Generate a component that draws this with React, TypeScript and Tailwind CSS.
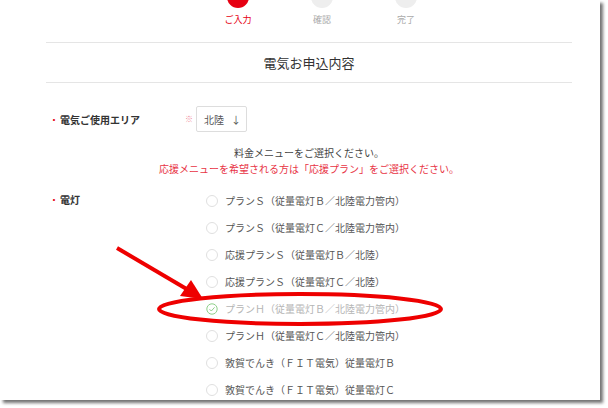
import React from 'react';

const plans = [
  'プランＳ（従量電灯Ｂ／北陸電力管内）',
  'プランＳ（従量電灯Ｃ／北陸電力管内）',
  '応援プランＳ（従量電灯Ｂ／北陸）',
  '応援プランＳ（従量電灯Ｃ／北陸）',
  'プランＨ（従量電灯Ｂ／北陸電力管内）',
  'プランＨ（従量電灯Ｃ／北陸電力管内）',
  '敦賀でんき（ＦＩＴ電気）従量電灯Ｂ',
  '敦賀でんき（ＦＩＴ電気）従量電灯Ｃ',
];

const font = { fontFamily: '"Noto Sans CJK JP", "Noto Sans", sans-serif' };

export default function App() {
  return (
    <div className="w-[608px] h-[408px] bg-white overflow-hidden" style={font}>
      <div className="relative w-[600px] h-[400px] bg-white overflow-hidden shadow-[3px_3px_3px_rgba(0,0,0,0.55)]">
        {/* steps */}
        <div className="flex justify-center gap-[54px] pl-[44px] -mt-[14px]">
          {['ご入力', '確認', '完了'].map((s, i) => (
            <div key={s} className="flex flex-col items-center w-[30px]">
              <div className={`w-[22px] h-[22px] rounded-full ${i === 0 ? 'bg-[#e60012]' : 'bg-[#eeeeee]'}`} />
              <div className={`mt-[7px] text-[9px] leading-none whitespace-nowrap ${i === 0 ? 'text-[#e60012]' : 'text-[#aaaaaa]'}`}>{s}</div>
            </div>
          ))}
        </div>
        <div className="ml-[46px] w-[526px] mt-[18px] border-t border-[#e5e5e5]" />
        <div className="ml-[46px] w-[526px] h-[40px] flex items-center justify-center text-[13px] text-[#333] border-b border-[#e5e5e5]">電気お申込内容</div>

        <div className="flex items-center mt-[23px] ml-[49px] h-[26px]">
          <span className="text-[#e60012] text-[10px] w-[11px]">・</span>
          <span className="text-[10px] text-[#333] font-bold w-[125px]">電気ご使用エリア</span>
          <span className="text-[#f08a9a] text-[8px] w-[11px]">※</span>
          <div className="w-[51px] h-[26px] border border-[#dddddd] rounded-[2px] flex items-center justify-between pl-[7px] pr-[5px] text-[10px] text-[#555]">
            <span>北陸</span><span>↓</span>
          </div>
        </div>

        <div className="mt-[13px] ml-[46px] w-[526px] text-center text-[10px] leading-[16px]">
          <div className="text-[#444]">料金メニューをご選択ください。</div>
          <div className="text-[#e83344]">応援メニューを希望される方は「応援プラン」をご選択ください。</div>
        </div>

        <div className="flex mt-[10px] ml-[49px]">
          <div className="flex items-center h-[24px] w-[157px]">
            <span className="text-[#e60012] text-[10px] w-[11px]">・</span>
            <span className="text-[10px] text-[#333] font-bold">電灯</span>
          </div>
          <div className="flex flex-col">
            {plans.map((p, i) => (
              <div key={p} className="h-[27px] flex items-center gap-[7px] text-[10px]">
                {i === 4 ? (
                  <svg width="12" height="12" viewBox="0 0 12 12">
                    <circle cx="6" cy="6" r="5.2" fill="none" stroke="#8fd08a" strokeWidth="1" />
                    <path d="M3.5 6.2 L5.3 8 L8.6 4.3" fill="none" stroke="#8fd08a" strokeWidth="1" />
                  </svg>
                ) : (
                  <div className="w-[12px] h-[12px] rounded-full border border-[#e0e0e0]" />
                )}
                <span className={i === 4 ? 'text-[#b5b5b5]' : 'text-[#555]'}>{p}</span>
              </div>
            ))}
          </div>
        </div>

        <svg className="absolute left-0 top-0 pointer-events-none" width="600" height="400">
          <ellipse cx="300" cy="309" rx="141" ry="15" fill="none" stroke="#ee0000" strokeWidth="4" />
          <line x1="117" y1="248" x2="190" y2="291" stroke="#ee0000" strokeWidth="4" />
          <polygon points="203,299 180,296 191,280" fill="#ee0000" />
        </svg>
      </div>
    </div>
  );
}
